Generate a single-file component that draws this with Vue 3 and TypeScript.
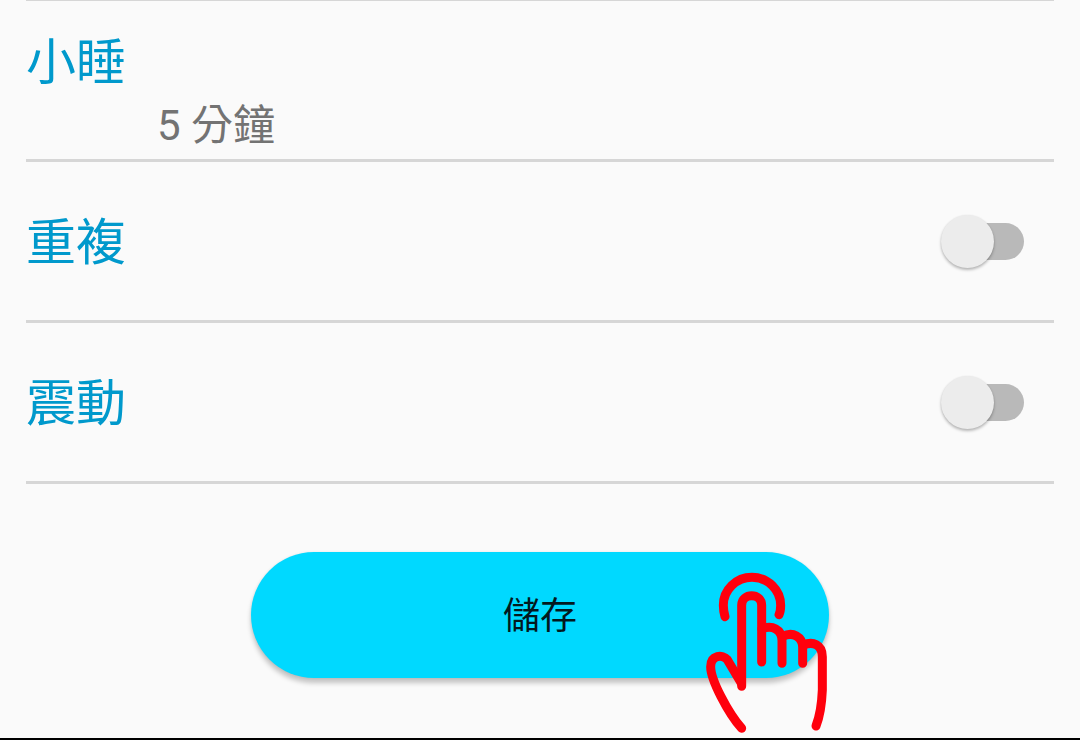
<script setup lang="ts">
import { ref } from 'vue'

interface ToggleSetting {
  label: string
  on: boolean
}

const snoozeMinutes = ref<number>(5)
const toggles = ref<ToggleSetting[]>([
  { label: '重複', on: false },
  { label: '震動', on: false },
])
</script>

<template>
  <main class="screen">
    <section class="row snooze">
      <h2 class="label">小睡</h2>
      <p class="value">{{ snoozeMinutes }} 分鐘</p>
    </section>

    <section v-for="item in toggles" :key="item.label" class="row toggle-row">
      <h2 class="label">{{ item.label }}</h2>
      <button
        class="switch"
        :class="{ on: item.on }"
        role="switch"
        :aria-checked="item.on"
        :aria-label="item.label"
        @click="item.on = !item.on"
      >
        <span class="thumb"></span>
      </button>
    </section>

    <div class="actions">
      <button class="save">儲存</button>
    </div>

    <svg class="tap-hand" viewBox="0 0 480 540" aria-hidden="true">
      <path d="M105 170C102 160 100 148 100 136A86 84 0 0 1 272 136C272 146 271 156 267 164" />
      <path d="M155 505C115 460 62 360 62 320C62 284 98 282 112 299L154 370" />
      <path d="M155 379V136C155 98 215 98 215 136V306" />
      <path d="M216 207C246 194 276 208 276 242V310" />
      <path d="M279 229C308 214 338 230 338 262V310" />
      <path d="M340 256C368 242 397 254 397 290V390C395 438 389 470 378 498" />
    </svg>
  </main>
</template>

<style>
body {
  margin: 0;
  overflow: hidden;
}
</style>

<style scoped>
.screen {
  position: relative;
  box-sizing: border-box;
  width: 1080px;
  height: 740px;
  padding: 0 26px;
  overflow: hidden;
  background: #fafafa;
  border-bottom: 2px solid #000;
  font-family: Roboto, "Noto Sans CJK TC", sans-serif;
}

.row {
  box-sizing: border-box;
  height: 161px;
  border-bottom: 3px solid #d6d6d6;
}

.snooze {
  height: 162px;
  border-top: 1px solid #d6d6d6;
  padding-top: 26px;
}

.label {
  margin: 0;
  font-size: 50px;
  font-weight: 400;
  line-height: 72px;
  color: #0099cc;
}

.value {
  margin: 0 0 0 131px;
  font-size: 42px;
  line-height: 53px;
  color: #737373;
}

.toggle-row {
  display: flex;
  align-items: center;
  justify-content: space-between;
}

.toggle-row .label {
  padding-top: 4px;
}

.switch {
  display: flex;
  align-items: center;
  width: 73px;
  height: 37px;
  margin-right: 30px;
  padding: 0;
  border: 0;
  border-radius: 19px;
  background: #b9b9b9;
}

.thumb {
  flex: none;
  width: 53px;
  height: 53px;
  margin-left: -10px;
  border-radius: 50%;
  background: #ececec;
  box-shadow: 0 2px 3px rgba(0, 0, 0, 0.27), 0 0 2px rgba(0, 0, 0, 0.06);
}

.switch.on {
  justify-content: flex-end;
  background: #80cce6;
}

.switch.on .thumb {
  margin: 0 -10px 0 0;
  background: #0099cc;
}

.actions {
  display: flex;
  justify-content: center;
  padding-top: 68px;
}

.save {
  width: 578px;
  height: 126px;
  padding: 4px 0 0;
  border: 0;
  border-radius: 63px;
  background: #00d9ff;
  box-shadow: 0 5px 5px rgba(0, 0, 0, 0.22), 0 0 3px rgba(0, 0, 0, 0.08);
  color: #03191e;
  font-family: inherit;
  font-size: 37px;
  line-height: 54px;
}

.tap-hand {
  position: absolute;
  left: 690px;
  top: 560px;
  width: 160px;
  height: 180px;
  fill: none;
  stroke: #ff000c;
  stroke-width: 27px;
  stroke-linecap: round;
  stroke-linejoin: round;
  pointer-events: none;
}
</style>
